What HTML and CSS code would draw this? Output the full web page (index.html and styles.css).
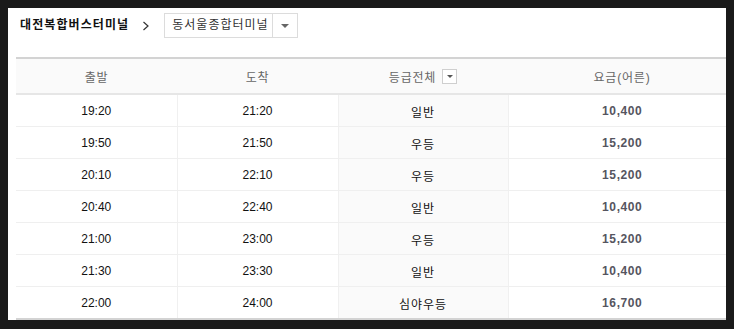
FILE: index.html
```html
<!DOCTYPE html>
<html lang="ko">
<head>
<meta charset="utf-8">
<link rel="stylesheet" href="styles.css">
</head>
<body>
<div class="panel">
  <div class="route">
    <span class="origin">대전복합버스터미널</span>
    <span class="arrow"><svg width="6" height="10" viewBox="0 0 6 10"><path d="M0.5 1 L5 5 L0.5 9" fill="none" stroke="#333" stroke-width="1.2"/></svg></span>
    <div class="select">
      <span class="select-text">동서울종합터미널</span>
      <span class="select-btn"><span class="tri"></span></span>
    </div>
  </div>
  <table class="schedule">
    <colgroup>
      <col class="c1"><col class="c2"><col class="c3"><col class="c4">
    </colgroup>
    <thead>
      <tr>
        <th>출발</th>
        <th>도착</th>
        <th><span class="grade">등급전체<span class="mini-select"><span class="mini-tri"></span></span></span></th>
        <th>요금(어른)</th>
      </tr>
    </thead>
    <tbody>
      <tr><td>19:20</td><td>21:20</td><td class="g">일반</td><td class="fare">10,400</td></tr>
      <tr><td>19:50</td><td>21:50</td><td class="g">우등</td><td class="fare">15,200</td></tr>
      <tr><td>20:10</td><td>22:10</td><td class="g">우등</td><td class="fare">15,200</td></tr>
      <tr><td>20:40</td><td>22:40</td><td class="g">일반</td><td class="fare">10,400</td></tr>
      <tr><td>21:00</td><td>23:00</td><td class="g">우등</td><td class="fare">15,200</td></tr>
      <tr><td>21:30</td><td>23:30</td><td class="g">일반</td><td class="fare">10,400</td></tr>
      <tr><td>22:00</td><td>24:00</td><td class="g">심야우등</td><td class="fare">16,700</td></tr>
    </tbody>
  </table>
</div>
</body>
</html>
```
FILE: styles.css
```css
html, body {
  margin: 0;
  padding: 0;
  background: #1a1a1a;
}
body {
  padding: 8px;
  font-family: "Liberation Sans", "Noto Sans CJK KR", sans-serif;
  font-size: 12px;
  color: #111;
}
.panel {
  width: 718px;
  height: 312px;
  background: #fff;
  overflow: hidden;
}
.route {
  height: 49px;
  display: flex;
  align-items: flex-start;
  padding: 5px 0 0 12px;
  box-sizing: border-box;
}
.origin {
  font-weight: bold;
  font-size: 12px;
  line-height: 25px;
  color: #111;
  letter-spacing: 1.1px;
}
.arrow {
  margin-left: 14px;
  height: 25px;
  display: flex;
  align-items: center;
}
.select {
  margin-left: 15px;
  display: flex;
  height: 25px;
  border: 1px solid #dcdcdc;
  box-sizing: border-box;
}
.select-text {
  width: 108px;
  padding-left: 7px;
  box-sizing: border-box;
  line-height: 23px;
  color: #333;
  letter-spacing: 1px;
  border-right: 1px solid #dcdcdc;
}
.select-btn {
  width: 24px;
  display: flex;
  align-items: center;
  justify-content: center;
}
.tri {
  width: 0;
  height: 0;
  border-left: 4px solid transparent;
  border-right: 4px solid transparent;
  border-top: 4px solid #666;
}
.schedule {
  margin-left: 8px;
  width: 720px;
  border-collapse: collapse;
  table-layout: fixed;
  border-top: 2px solid #d3d3d3;
  border-bottom: 2px solid #d3d3d3;
}
.c1 { width: 161px; }
.c2 { width: 161px; }
.c3 { width: 170px; }
.c4 { width: 228px; }
th {
  height: 34px;
  padding: 0;
  background: #fafafa;
  color: #666;
  font-weight: normal;
  font-size: 12px;
  letter-spacing: 0.8px;
  border-bottom: 2px solid #e6e6e6;
  text-align: center;
}
td {
  height: 30px;
  padding: 1px 0 0;
  text-align: center;
  border-bottom: 1px solid #efefef;
  border-left: 1px solid #f0f0f0;
  color: #111;
}
td:first-child { border-left: none; }
tbody tr:last-child td { border-bottom: none; }
td.g {
  background: #fafafa;
  letter-spacing: 1px;
}
td.fare {
  font-weight: bold;
  color: #555560;
  letter-spacing: 0.6px;
}
.grade {
  display: inline-flex;
  align-items: center;
}
.mini-select {
  margin-left: 6px;
  width: 15px;
  height: 15px;
  box-sizing: border-box;
  border: 1px solid #cfcfcf;
  background: #fff;
  display: inline-flex;
  align-items: center;
  justify-content: center;
}
.mini-tri {
  width: 0;
  height: 0;
  border-left: 3px solid transparent;
  border-right: 3px solid transparent;
  border-top: 3px solid #555;
}
```
